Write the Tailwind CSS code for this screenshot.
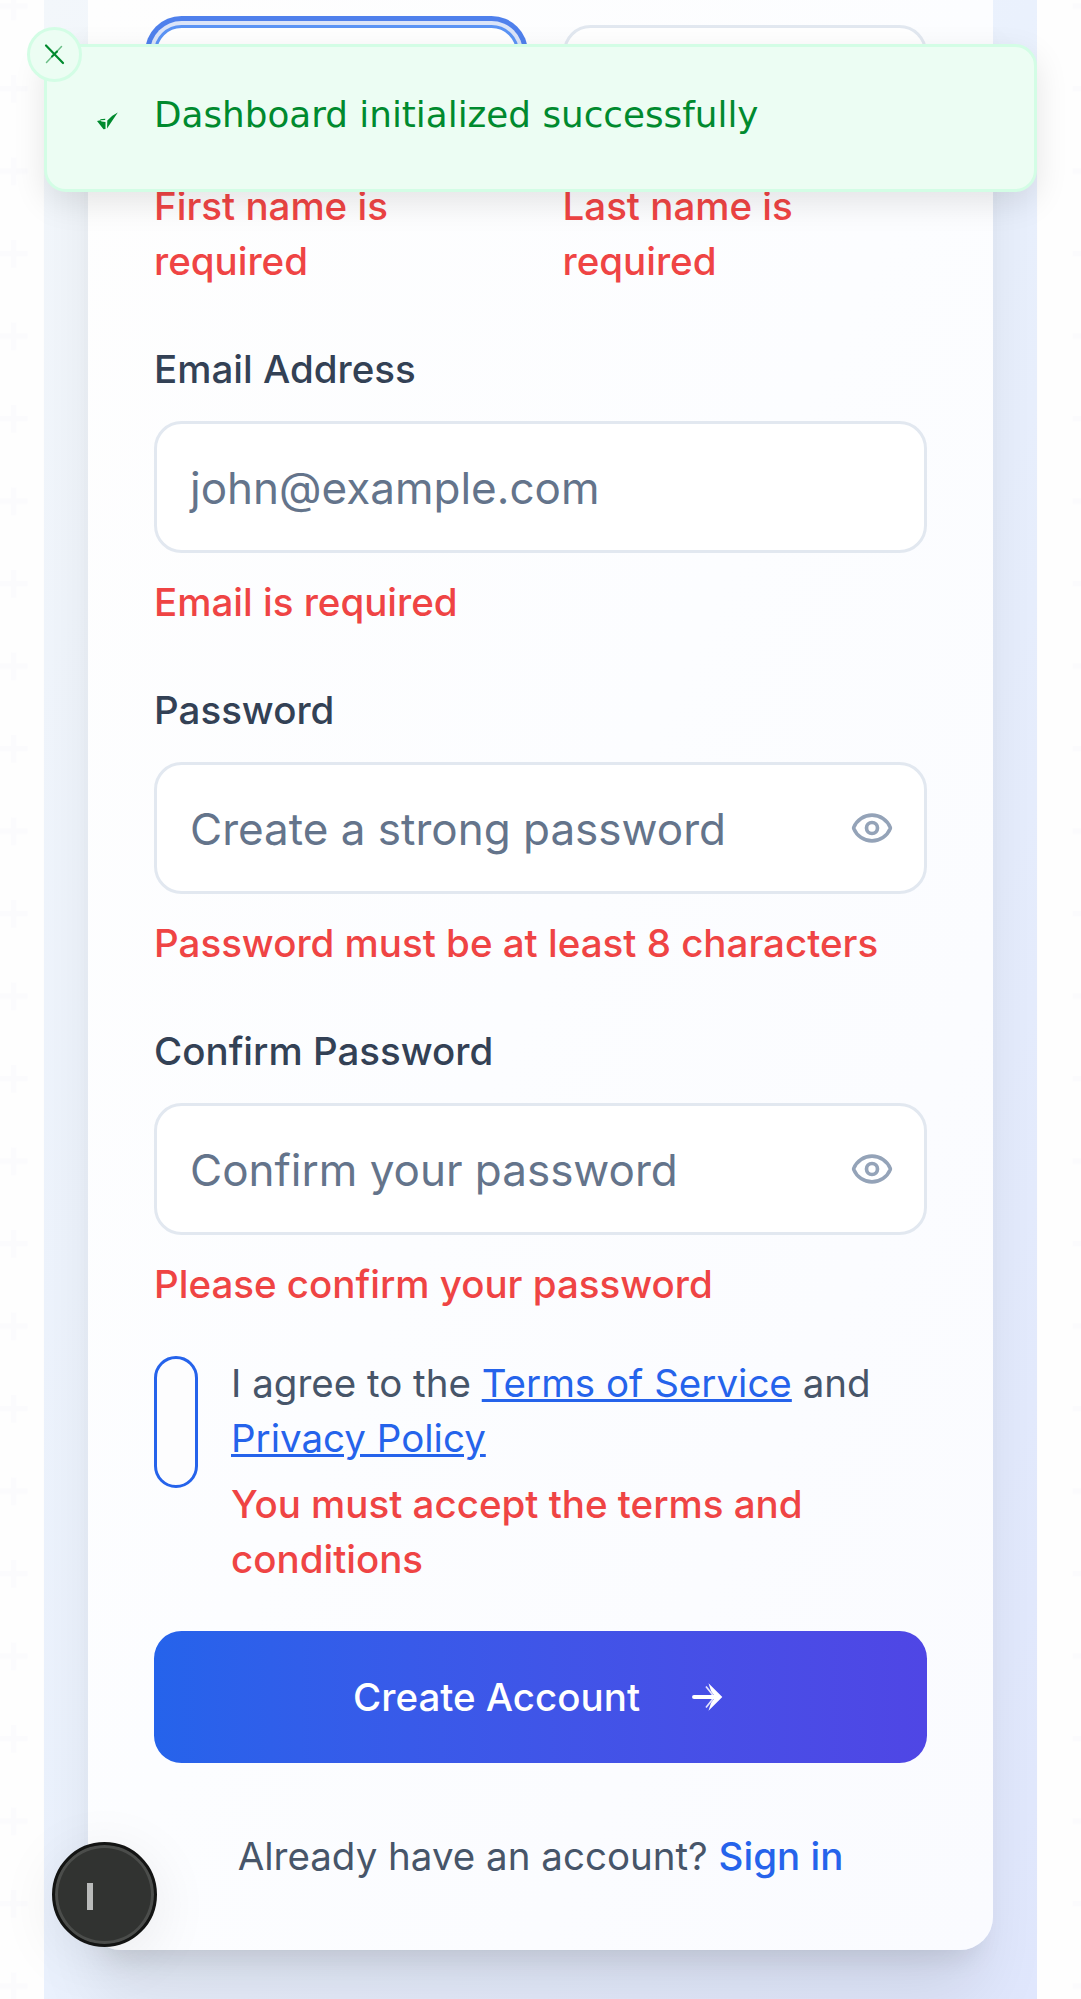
<!DOCTYPE html>
<html lang="en">
<head>
<meta charset="utf-8">
<title>Create Account</title>
<script src="https://cdn.jsdelivr.net/npm/@tailwindcss/browser@4"></script>
</head>
<body class="relative h-[1999px] w-[1081px] overflow-hidden bg-[#fefefe] font-['Inter',sans-serif] text-[38.5px] leading-[55px]">
<svg class="absolute inset-0 h-full w-full" aria-hidden="true">
  <defs>
    <pattern id="plus" width="82.5" height="82.5" y="-7.5" patternUnits="userSpaceOnUse">
      <path d="M11 0h5.5v11h11v5.5h-11v11H11v-11H0V11h11z" fill="#fbfbfd"/>
    </pattern>
  </defs>
  <rect width="1081" height="1999" fill="url(#plus)"/>
</svg>

<main class="relative mx-[44px] h-[1999px] bg-linear-to-br from-[#f3f7fb] via-[#eaf1fd] to-[#e0e7fd] px-[44px]">
  <form class="flex h-[1950px] flex-col rounded-b-[33px] bg-linear-to-br from-[#fefefe] via-[#fcfdff] to-[#fafbff] px-[66px] pt-[25px] font-medium text-[#ef4444] shadow-[0_55px_69px_-14px_rgba(0,0,0,0.1),0_22px_28px_-16px_rgba(0,0,0,0.1)]">
    <div class="grid grid-cols-2 gap-[44px]">
      <div>
        <div class="h-[132px] rounded-[27.5px] border-[3px] border-[#5b94f5] bg-white shadow-[0_0_0_4px_#dbe4f8,0_0_0_9px_#4f80ec]"></div>
        <p class="mt-[22px]">First name is required</p>
      </div>
      <div>
        <div class="h-[132px] rounded-[27.5px] border-[3px] border-[#e2e8f0] bg-white"></div>
        <p class="mt-[22px]">Last name is required</p>
      </div>
    </div>

    <label class="mt-[53px] text-[#334155]">Email Address</label>
    <div class="mt-[24px] flex h-[132px] shrink-0 items-center rounded-[27.5px] border-[3px] border-[#e2e8f0] bg-white px-[33px] pt-[2px] text-[44px] font-normal text-[#64748b]">john@example.com</div>
    <p class="mt-[22px]">Email is required</p>

    <label class="mt-[53px] text-[#334155]">Password</label>
    <div class="mt-[24px] flex h-[132px] shrink-0 items-center justify-between rounded-[27.5px] border-[3px] border-[#e2e8f0] bg-white px-[33px] pr-[30px] text-[44px] font-normal text-[#64748b]">
      <span class="pt-[2px]">Create a strong password</span>
      <svg class="size-[44px] text-[#94a3b8]" viewBox="0 0 24 24" fill="none" stroke="currentColor" stroke-width="2" stroke-linecap="round" stroke-linejoin="round"><path d="M2.062 12.348a1 1 0 0 1 0-.696 10.75 10.75 0 0 1 19.876 0 1 1 0 0 1 0 .696 10.75 10.75 0 0 1-19.876 0"/><circle cx="12" cy="12" r="3"/></svg>
    </div>
    <p class="mt-[22px]">Password must be at least 8 characters</p>

    <label class="mt-[53px] text-[#334155]">Confirm Password</label>
    <div class="mt-[24px] flex h-[132px] shrink-0 items-center justify-between rounded-[27.5px] border-[3px] border-[#e2e8f0] bg-white px-[33px] pr-[30px] text-[44px] font-normal text-[#64748b]">
      <span class="pt-[2px]">Confirm your password</span>
      <svg class="size-[44px] text-[#94a3b8]" viewBox="0 0 24 24" fill="none" stroke="currentColor" stroke-width="2" stroke-linecap="round" stroke-linejoin="round"><path d="M2.062 12.348a1 1 0 0 1 0-.696 10.75 10.75 0 0 1 19.876 0 1 1 0 0 1 0 .696 10.75 10.75 0 0 1-19.876 0"/><circle cx="12" cy="12" r="3"/></svg>
    </div>
    <p class="mt-[22px]">Please confirm your password</p>

    <div class="mt-[44px] flex items-start gap-[33px]">
      <div class="h-[132px] w-[44px] shrink-0 rounded-full border-[3px] border-[#2563eb] bg-[#fdfdfe]"></div>
      <div>
        <p class="font-normal text-[#475569]">I agree to the <span class="text-[#2563eb] underline">Terms of Service</span> and <span class="text-[#2563eb] underline">Privacy Policy</span></p>
        <p class="mt-[11px]">You must accept the terms and conditions</p>
      </div>
    </div>

    <div class="mt-[44px] flex h-[132px] shrink-0 items-center justify-center gap-[43px] rounded-[27.5px] bg-linear-to-r from-[#2563eb] to-[#4f46e5] pr-px text-white">
      <span>Create Account</span>
      <svg class="size-[44px]" viewBox="0 0 44 44" fill="#fff"><path d="M11 22h22" stroke="#fff" stroke-width="3.9" stroke-linecap="round"/><path d="M25.500 8.300L39.300 22 25.500 35.700l2.500-7.700L31 23.800h-2v-3.600h2L28 16z"/><path d="M23 11.500l6.800 8.500M23 32.500l6.800-8.500" stroke="#fff" stroke-width="1.700" stroke-opacity=".85"/></svg>
    </div>
    <p class="mt-[66px] text-center font-normal text-[#475569]">Already have an account? <span class="font-medium text-[#2563eb]">Sign in</span></p>
  </form>
</main>

<!-- Toast -->
<div class="absolute top-[44px] left-[44px] flex h-[148px] w-[993px] items-center rounded-[22px] border-[3px] border-[#d3fde5] bg-[#ecfdf3] pl-[107px] font-['DejaVu_Sans',sans-serif] text-[35.75px] text-[#008a2e] shadow-[0_11px_33px_rgba(0,0,0,0.1)]">
  <span class="relative -top-[4px]">Dashboard initialized successfully</span>
  <svg class="absolute top-[64px] left-[50px] h-[20px] w-[22px]" viewBox="0 0 22 20" fill="#008a2e"><path d="M0 10l3.500-.8 1 1.200 4 .6v7l-2 .3zM3 8.200l5.200-.5v1.300L4 9.300zM20.800 1.500L10 17.500l.3-8 5-4.800z"/></svg>
  <div class="absolute -top-[20px] -left-[20px] flex size-[55px] items-center justify-center rounded-full border-[3px] border-[#d3fde5] bg-[#ecfdf3]">
    <svg class="size-[33px]" viewBox="0 0 33 33" fill="none" stroke="#008a2e" stroke-linecap="round"><path d="M8 7.500L25 25" stroke-width="2.200"/><path d="M23.500 8.500L8.500 24.500" stroke-width="1.500" stroke-opacity=".55"/><path d="M19 13.500l-5 5" stroke-width="2"/></svg>
  </div>
</div>

<!-- Developer tools button -->
<div class="absolute top-[1842px] left-[52px] size-[105px] rounded-full border-[3px] border-[#131413] bg-[#313331] shadow-[inset_0_0_0_3px_#4b4d4b,0_11px_60px_rgba(0,0,0,0.08)]">
  <div class="absolute top-[38px] left-[32px] h-[27px] w-[6px] bg-[#b9bbba]"></div>
</div>
</body>
</html>
